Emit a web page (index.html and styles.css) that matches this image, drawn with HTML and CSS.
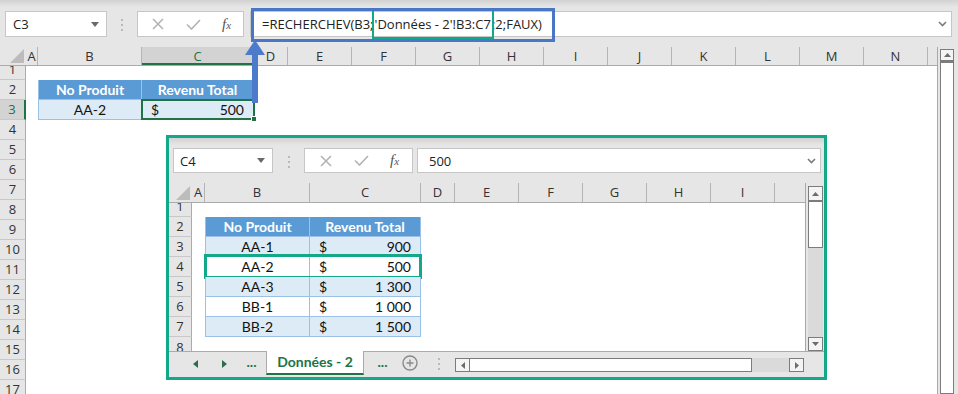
FILE: index.html
```html
<!DOCTYPE html>
<html lang="fr">
<head>
<meta charset="UTF-8">
<meta name="viewport" content="width=device-width, initial-scale=1.0">
<title>RECHERCHEV</title>
<link rel="stylesheet" href="styles.css">
</head>
<body>
<div id="app">
  <div class="bar">
    <div class="namebox">C3<span class="caret"></span></div>
    <div class="grip"><i></i><i></i><i></i></div>
    <div class="fxbox">
      <svg class="ico cross" width="12" height="12" viewBox="0 0 12 12"><path d="M1 1L11 11M11 1L1 11"/></svg>
      <svg class="ico tick" width="15" height="11" viewBox="0 0 15 11"><path d="M1 5.5L5.5 10L14 1"/></svg>
      <span class="fx">f<i>x</i></span>
    </div>
    <div class="formula">
      <span class="ftext">=RECHERCHEV(B3;<span class="ref">'Données - 2'!B3:C7</span>;2;FAUX)</span>
      <svg class="chev" width="9" height="6" viewBox="0 0 9 6"><path d="M1 1L4.5 4.5L8 1"/></svg>
    </div>
  </div>

  <div class="sheet">
    <div class="grid">
      <div class="heads">
        <div class="corner"><svg width="14" height="14" viewBox="0 0 14 14"><polygon points="14,0 14,14 0,14"/></svg></div>
        <div class="ch w-a">A</div>
        <div class="ch w-b">B</div>
        <div class="ch w-c sel">C</div>
        <div class="ch w-d">D</div>
        <div class="ch w-e">E</div>
        <div class="ch w-e">F</div>
        <div class="ch w-e">G</div>
        <div class="ch w-e">H</div>
        <div class="ch w-e">I</div>
        <div class="ch w-e">J</div>
        <div class="ch w-e">K</div>
        <div class="ch w-e">L</div>
        <div class="ch w-e">M</div>
        <div class="ch w-e">N</div>
        <div class="ch w-x"></div>
      </div>
      <div class="row short"><div class="rh"><span>1</span></div></div>
      <div class="row">
        <div class="rh">2</div><div class="w-a"></div>
        <div class="cell th w-b first">No Produit</div>
        <div class="cell th w-c">Revenu Total</div>
      </div>
      <div class="row">
        <div class="rh sel">3</div><div class="w-a"></div>
        <div class="cell band w-b first mid">AA-2</div>
        <div class="cell band w-c money active"><span>$</span><span>500</span><b class="handle"></b></div>
      </div>
      <div class="row"><div class="rh">4</div></div>
      <div class="row"><div class="rh">5</div></div>
      <div class="row"><div class="rh">6</div></div>
      <div class="row"><div class="rh">7</div></div>
      <div class="row"><div class="rh">8</div></div>
      <div class="row"><div class="rh">9</div></div>
      <div class="row"><div class="rh">10</div></div>
      <div class="row"><div class="rh">11</div></div>
      <div class="row"><div class="rh">12</div></div>
      <div class="row"><div class="rh">13</div></div>
      <div class="row"><div class="rh">14</div></div>
      <div class="row"><div class="rh">15</div></div>
      <div class="row"><div class="rh">16</div></div>
      <div class="row"><div class="rh">17</div></div>
    </div>
    <div class="vscroll">
      <div class="sbtn"><svg width="7" height="4" viewBox="0 0 7 4"><polygon points="3.5,0 7,4 0,4"/></svg></div>
      <div class="thumb"></div>
    </div>
  </div>

  <div class="callout"></div>
  <svg class="arrow" width="22" height="64" viewBox="0 0 22 64"><polygon points="11,0 21,15 1,15"/><rect x="8" y="14" width="6" height="49"/></svg>

  <div class="inset">
    <div class="bar">
      <div class="namebox">C4<span class="caret"></span></div>
      <div class="grip"><i></i><i></i><i></i></div>
      <div class="fxbox">
        <svg class="ico cross" width="12" height="12" viewBox="0 0 12 12"><path d="M1 1L11 11M11 1L1 11"/></svg>
        <svg class="ico tick" width="15" height="11" viewBox="0 0 15 11"><path d="M1 5.5L5.5 10L14 1"/></svg>
        <span class="fx">f<i>x</i></span>
      </div>
      <div class="formula">
        <span class="ftext">500</span>
        <svg class="chev" width="9" height="6" viewBox="0 0 9 6"><path d="M1 1L4.5 4.5L8 1"/></svg>
      </div>
    </div>

    <div class="sheet">
      <div class="grid">
        <div class="heads">
          <div class="corner"><svg width="14" height="14" viewBox="0 0 14 14"><polygon points="14,0 14,14 0,14"/></svg></div>
          <div class="ch w-a">A</div>
          <div class="ch w-b">B</div>
          <div class="ch w-c">C</div>
          <div class="ch w-d">D</div>
          <div class="ch w-e">E</div>
          <div class="ch w-e">F</div>
          <div class="ch w-e">G</div>
          <div class="ch w-e">H</div>
          <div class="ch w-e">I</div>
          <div class="ch w-x"></div>
        </div>
        <div class="row short"><div class="rh"><span>1</span></div></div>
        <div class="row">
          <div class="rh">2</div><div class="w-a"></div>
          <div class="cell th w-b first">No Produit</div>
          <div class="cell th w-c">Revenu Total</div>
        </div>
        <div class="row">
          <div class="rh">3</div><div class="w-a"></div>
          <div class="cell band w-b first mid">AA-1</div>
          <div class="cell band w-c money"><span>$</span><span>900</span></div>
        </div>
        <div class="row found">
          <div class="rh">4</div><div class="w-a"></div>
          <div class="cell w-b first mid">AA-2</div>
          <div class="cell w-c money"><span>$</span><span>500</span></div>
        </div>
        <div class="row">
          <div class="rh">5</div><div class="w-a"></div>
          <div class="cell band w-b first mid">AA-3</div>
          <div class="cell band w-c money"><span>$</span><span>1&#8239;300</span></div>
        </div>
        <div class="row">
          <div class="rh">6</div><div class="w-a"></div>
          <div class="cell w-b first mid">BB-1</div>
          <div class="cell w-c money"><span>$</span><span>1&#8239;000</span></div>
        </div>
        <div class="row">
          <div class="rh">7</div><div class="w-a"></div>
          <div class="cell band w-b first mid">BB-2</div>
          <div class="cell band w-c money"><span>$</span><span>1&#8239;500</span></div>
        </div>
        <div class="row short"><div class="rh top"><span>8</span></div></div>
      </div>
      <div class="vscroll">
        <div class="sbtn"><svg width="7" height="4" viewBox="0 0 7 4"><polygon points="3.5,0 7,4 0,4"/></svg></div>
        <div class="thumb"></div>
        <div class="track"></div>
        <div class="sbtn"><svg width="7" height="4" viewBox="0 0 7 4"><polygon points="0,0 7,0 3.5,4"/></svg></div>
      </div>
    </div>

    <div class="tabs">
      <svg class="tarrow" width="5" height="8" viewBox="0 0 5 8"><polygon points="5,0 5,8 0,4"/></svg>
      <svg class="tarrow" width="5" height="8" viewBox="0 0 5 8"><polygon points="0,0 5,4 0,8"/></svg>
      <span class="more">...</span>
      <span class="tab">Données - 2</span>
      <span class="more">...</span>
      <svg class="plus" width="16" height="16" viewBox="0 0 16 16"><circle cx="8" cy="8" r="7"/><path d="M8 4.5V11.5M4.5 8H11.5"/></svg>
      <span class="tgrip"><i></i><i></i><i></i></span>
      <div class="hscroll">
        <div class="sbtn"><svg width="4" height="7" viewBox="0 0 4 7"><polygon points="4,0 4,7 0,3.5"/></svg></div>
        <div class="hthumb"></div>
        <div class="htrack"></div>
        <div class="sbtn"><svg width="4" height="7" viewBox="0 0 4 7"><polygon points="0,0 4,3.5 0,7"/></svg></div>
      </div>
    </div>
  </div>
</div>
</body>
</html>
```

FILE: styles.css
```css
*, *::before, *::after {
    box-sizing: border-box;
    margin: 0;
    padding: 0;
}

body {
    background: #fff;
    font-family: "Open Sans", "Noto Sans", sans-serif;
    color: #222;
}

#app {
    position: relative;
    width: 958px;
    height: 394px;
    overflow: hidden;
    background: #e6e6e6;
}

/* formula bar */
.bar {
    display: flex;
    align-items: flex-start;
    height: 47px;
    padding: 11px 6px 0 5px;
    background: linear-gradient(#d2d2d2, #e6e6e6 7px);
}
.namebox {
    display: flex;
    align-items: center;
    justify-content: space-between;
    width: 102px;
    height: 26px;
    padding: 0 7px 0 7px;
    background: #fff;
    border: 1px solid #c6c6c6;
    font-size: 13px;
}
.caret {
    border-left: 4px solid transparent;
    border-right: 4px solid transparent;
    border-top: 5px solid #6a6a6a;
}
.grip {
    display: flex;
    flex-direction: column;
    align-items: center;
    gap: 3px;
    width: 30px;
    padding-top: 8px;
}
.grip i, .tgrip i {
    width: 2px;
    height: 2px;
    background: #b9b9b9;
}
.fxbox {
    display: flex;
    align-items: center;
    width: 107px;
    height: 26px;
    padding-left: 14px;
    background: #fff;
    border: 1px solid #c6c6c6;
}
.ico path {
    fill: none;
    stroke: #b3b3b3;
    stroke-width: 1.6;
}
.tick {
    margin-left: 22px;
}
.fx {
    margin-left: 21px;
    font-family: "Liberation Serif", serif;
    font-style: italic;
    font-size: 15px;
    color: #555;
}
.fx i {
    font-size: 11px;
}
.formula {
    flex: 1;
    display: flex;
    align-items: center;
    justify-content: space-between;
    height: 26px;
    margin-left: 6px;
    padding: 0 4px 0 11px;
    background: #fff;
    border: 1px solid #c6c6c6;
    font-size: 13px;
}
.ref {
    outline: 2.5px solid #13a88a;
    outline-offset: 0;
    padding: 5px 1px 4px 1px;
}
.chev path {
    fill: none;
    stroke: #7b7b7b;
    stroke-width: 1.6;
}

/* grid */
.sheet {
    display: flex;
    height: 347px;
    overflow: hidden;
}
.grid {
    width: 938px;
    background: #fff;
    border-right: 1px solid #a8a8a8;
}
.heads {
    display: flex;
    height: 19px;
    background: #e6e6e6;
    border-bottom: 1px solid #ababab;
}
.corner {
    display: flex;
    align-items: flex-end;
    justify-content: flex-end;
    width: 26px;
    padding: 0 2px 2px 0;
}
.corner polygon {
    fill: #bcbcbc;
}
.ch {
    border-right: 1px solid #b4b4b4;
    font-size: 13px;
    line-height: 18px;
    text-align: center;
    color: #333;
}
.ch.sel {
    background: #d3d3d3;
    color: #217346;
    border-bottom: 2px solid #217346;
}
.ch.w-x {
    flex: 1;
    border-right: 0;
}
.w-a { width: 12px; }
.w-b { width: 104px; }
.w-c { width: 112px; }
.w-d { width: 34px; }
.w-e { width: 64px; }

.row {
    position: relative;
    display: flex;
    height: 20px;
}
.rh {
    width: 26px;
    background: #e6e6e6;
    border-right: 1px solid #ababab;
    border-bottom: 1px solid #c8c8c8;
    font-size: 13px;
    line-height: 19px;
    text-align: center;
    color: #333;
}
.rh.sel {
    background: #d3d3d3;
    color: #217346;
    border-right: 2px solid #217346;
}
.row.short {
    height: 14px;
}
.short .rh {
    display: flex;
    align-items: flex-end;
    justify-content: center;
    overflow: hidden;
}
.short .rh span {
    line-height: 20px;
}
.short .rh.top {
    align-items: flex-start;
    border-bottom: 0;
}

.cell {
    position: relative;
    display: flex;
    align-items: center;
    padding: 0 9px;
    border-right: 1px solid #9bc2e6;
    border-bottom: 1px solid #9bc2e6;
    font-family: Lato, "Liberation Sans", sans-serif;
    font-size: 14px;
    color: #111;
}
.cell.first {
    border-left: 1px solid #9bc2e6;
}
.cell.th {
    justify-content: center;
    background: #5b9bd5;
    border-color: #9bc2e6;
    font-weight: bold;
    color: #fff;
}
.cell.band {
    background: #ddebf7;
}
.cell.mid {
    justify-content: center;
}
.cell.money {
    justify-content: space-between;
}
.cell.active::after {
    content: "";
    position: absolute;
    top: -1px;
    left: -1px;
    right: -2px;
    bottom: -1px;
    border: 2px solid #217346;
}
.handle {
    position: absolute;
    right: -4px;
    bottom: -3px;
    z-index: 1;
    width: 6px;
    height: 6px;
    background: #217346;
    border: 1px solid #fff;
}

/* scrollbars */
.vscroll {
    display: flex;
    flex-direction: column;
    width: 20px;
    padding: 2px 0 0 2px;
}
.sbtn {
    display: flex;
    align-items: center;
    justify-content: center;
    width: 14px;
    height: 14px;
    background: #f4f4f4;
    border: 1px solid #7c7c7c;
}
.sbtn polygon {
    fill: #6c6c6c;
}
.thumb {
    width: 14px;
    height: 400px;
    background: #fff;
    border: 1px solid #7c7c7c;
    border-top-width: 2px;
}

/* overlays */
.callout {
    position: absolute;
    left: 251px;
    top: 8px;
    width: 304px;
    height: 34px;
    border: 3px solid #4a76c6;
}
.arrow {
    position: absolute;
    left: 244px;
    top: 40px;
}
.arrow polygon, .arrow rect {
    fill: #4d7bcb;
}

/* second sheet */
.inset {
    position: absolute;
    left: 166px;
    top: 135px;
    width: 661px;
    height: 245px;
    border: 3px solid #13a88a;
    background: #e6e6e6;
}
.inset .bar {
    height: 45px;
    padding: 10px 3px 0 4px;
}
.inset .namebox {
    width: 100px;
    height: 25px;
    padding-left: 6px;
}
.inset .grip {
    width: 31px;
}
.inset .fxbox {
    width: 109px;
    height: 25px;
    padding-left: 15px;
}
.inset .formula {
    height: 25px;
    margin-left: 4px;
}
.inset .sheet {
    height: 168px;
}
.inset .grid {
    width: 637px;
}
.inset .heads {
    height: 20px;
}
.inset .ch {
    line-height: 19px;
}
.inset .corner {
    width: 23px;
}
.inset .rh {
    width: 23px;
}
.inset .w-a { width: 13px; }
.inset .w-b { width: 105px; }
.inset .w-c { width: 111px; }

.inset .vscroll {
    width: 18px;
    padding: 3px 0 0 2px;
}
.inset .sbtn {
    width: 15px;
    height: 15px;
}
.inset .thumb {
    width: 15px;
    height: 47px;
    border-top-width: 1px;
}
.inset .track {
    width: 15px;
    height: 89px;
    background: #dadada;
}
.inset .vscroll .sbtn:last-child {
    height: 14px;
}

.row.found::after {
    content: "";
    position: absolute;
    top: -3px;
    left: 35px;
    width: 218px;
    bottom: -2px;
    border: 3px solid #13a88a;
}

/* sheet tabs */
.tabs {
    display: flex;
    align-items: flex-start;
    height: 25px;
    padding-left: 24px;
    border-top: 1px solid #ababab;
}
.tarrow {
    margin-top: 8px;
}
.tarrow polygon {
    fill: #2c6e4c;
}
.tarrow + .tarrow {
    margin-left: 24px;
}
.more {
    width: 39px;
    padding-left: 10px;
    font-family: Lato, sans-serif;
    font-weight: bold;
    font-size: 14px;
    line-height: 20px;
    color: #217346;
    text-align: center;
}
.tab {
    width: 98px;
    height: 24px;
    margin-top: -1px;
    background: #fff;
    border-left: 1px solid #ababab;
    border-right: 1px solid #ababab;
    border-bottom: 2px solid #217346;
    font-family: Lato, sans-serif;
    font-weight: bold;
    font-size: 14px;
    line-height: 22px;
    text-align: center;
    color: #217346;
}
.tab + .more {
    width: 37px;
    padding-left: 0;
}
.plus {
    margin-top: 3px;
    margin-left: 1px;
}
.plus circle, .plus path {
    fill: none;
    stroke: #8a8a8a;
    stroke-width: 1.4;
}
.tgrip {
    display: flex;
    flex-direction: column;
    gap: 3px;
    margin: 6px 15px 0 20px;
}
.hscroll {
    display: flex;
    width: 349px;
    height: 14px;
    margin-top: 6px;
}
.hscroll .sbtn {
    width: 15px;
    height: 14px;
}
.hthumb {
    width: 282px;
    background: #fff;
    border: 1px solid #7c7c7c;
    border-left-width: 0;
}
.htrack {
    width: 37px;
    background: #dadada;
}
```
